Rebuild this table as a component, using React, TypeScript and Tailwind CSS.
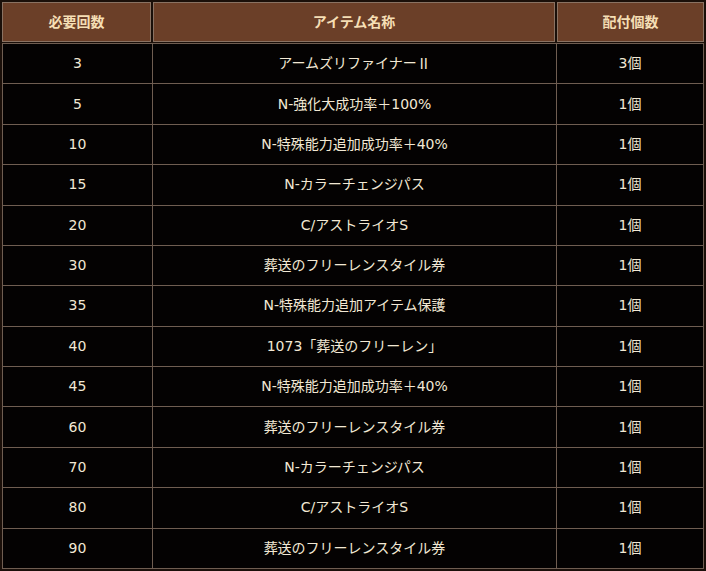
import type { ReactNode } from "react"

const cjk = '"Noto Sans CJK JP", sans-serif'

const rows: { count: string; item: ReactNode; qty: string }[] = [
  {
    count: "3",
    item: (
      <>
        アームズリファイナー<span style={{ fontFamily: cjk }}>Ⅱ</span>
      </>
    ),
    qty: "3個",
  },
  { count: "5", item: "N-強化大成功率＋100%", qty: "1個" },
  { count: "10", item: "N-特殊能力追加成功率＋40%", qty: "1個" },
  { count: "15", item: "N-カラーチェンジパス", qty: "1個" },
  { count: "20", item: "C/アストライオS", qty: "1個" },
  { count: "30", item: "葬送のフリーレンスタイル券", qty: "1個" },
  { count: "35", item: "N-特殊能力追加アイテム保護", qty: "1個" },
  { count: "40", item: "1073「葬送のフリーレン」", qty: "1個" },
  { count: "45", item: "N-特殊能力追加成功率＋40%", qty: "1個" },
  { count: "60", item: "葬送のフリーレンスタイル券", qty: "1個" },
  { count: "70", item: "N-カラーチェンジパス", qty: "1個" },
  { count: "80", item: "C/アストライオS", qty: "1個" },
  { count: "90", item: "葬送のフリーレンスタイル券", qty: "1個" },
]

const headers = ["必要回数", "アイテム名称", "配付個数"]

export default function App() {
  return (
    <div
      className="w-[706px] h-[571px] bg-[#1a0f09] p-[2px] flex flex-col gap-px"
      style={{ fontFamily: '"DejaVu Sans", "Noto Sans CJK JP", sans-serif' }}
    >
      {/* Header */}
      <div className="grid grid-cols-[149px_402px_1fr] gap-[2px] h-[40px] shrink-0">
        {headers.map((h) => (
          <div
            key={h}
            className="border border-[#8a7262] bg-[#6b3f28] flex items-center justify-center text-[14px] font-bold text-[#f5deb4]"
          >
            {h}
          </div>
        ))}
      </div>

      {/* Body */}
      <div className="flex-1 grid grid-cols-[149px_403px_1fr] grid-rows-[repeat(13,1fr)] gap-px bg-[#6f5d51] border border-[#6f5d51]">
        {rows.map((r, i) => (
          <div key={i} className="contents">
            <div className="bg-[#040202] flex items-center justify-center text-[14px] text-[#f2e8d4]">
              {r.count}
            </div>
            <div className="bg-[#040202] flex items-center justify-center text-[14px] text-[#f2e8d4]">
              {r.item}
            </div>
            <div className="bg-[#040202] flex items-center justify-center text-[14px] text-[#f2e8d4]">
              {r.qty}
            </div>
          </div>
        ))}
      </div>
    </div>
  )
}
